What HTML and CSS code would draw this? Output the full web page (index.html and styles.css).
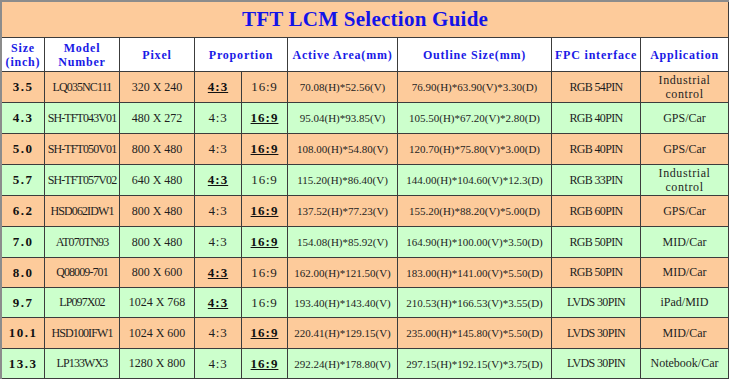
FILE: index.html
```html
<!DOCTYPE html>
<html>
<head>
<meta charset="utf-8">
<link rel="stylesheet" href="styles.css">
</head>
<body>
<table class="guide">
  <colgroup>
    <col class="c-size"><col class="c-model"><col class="c-pixel"><col class="c-p1"><col class="c-p2"><col class="c-active"><col class="c-outline"><col class="c-fpc"><col class="c-app">
  </colgroup>
  <tr class="title-row"><td colspan="9" class="title">TFT LCM Selection Guide</td></tr>
  <tr class="head-row">
    <td class="hd">Size<br>(inch)</td>
    <td class="hd">Model<br>Number</td>
    <td class="hd">Pixel</td>
    <td class="hd" colspan="2">Proportion</td>
    <td class="hd">Active Area(mm)</td>
    <td class="hd">Outline Size(mm)</td>
    <td class="hd">FPC interface</td>
    <td class="hd">Application</td>
  </tr>
  <tr class="row orange">
    <td class="size">3.5</td><td class="model">LQ035NC111</td><td>320 X 240</td><td class="sel">4:3</td><td class="ratio">16:9</td><td class="dim">70.08(H)*52.56(V)</td><td class="dim">76.90(H)*63.90(V)*3.30(D)</td><td class="fpc">RGB 54PIN</td><td class="two">Industrial<br>control</td>
  </tr>
  <tr class="row green">
    <td class="size">4.3</td><td class="model">SH-TFT043V01</td><td>480 X 272</td><td class="ratio">4:3</td><td class="sel">16:9</td><td class="dim">95.04(H)*93.85(V)</td><td class="dim">105.50(H)*67.20(V)*2.80(D)</td><td class="fpc">RGB 40PIN</td><td>GPS/Car</td>
  </tr>
  <tr class="row orange">
    <td class="size">5.0</td><td class="model">SH-TFT050V01</td><td>800 X 480</td><td class="ratio">4:3</td><td class="sel">16:9</td><td class="dim">108.00(H)*54.80(V)</td><td class="dim">120.70(H)*75.80(V)*3.00(D)</td><td class="fpc">RGB 40PIN</td><td>GPS/Car</td>
  </tr>
  <tr class="row green">
    <td class="size">5.7</td><td class="model">SH-TFT057V02</td><td>640 X 480</td><td class="sel">4:3</td><td class="ratio">16:9</td><td class="dim">115.20(H)*86.40(V)</td><td class="dim">144.00(H)*104.60(V)*12.3(D)</td><td class="fpc">RGB 33PIN</td><td class="two">Industrial<br>control</td>
  </tr>
  <tr class="row orange">
    <td class="size">6.2</td><td class="model">HSD062IDW1</td><td>800 X 480</td><td class="ratio">4:3</td><td class="sel">16:9</td><td class="dim">137.52(H)*77.23(V)</td><td class="dim">155.20(H)*88.20(V)*5.00(D)</td><td class="fpc">RGB 60PIN</td><td>GPS/Car</td>
  </tr>
  <tr class="row green">
    <td class="size">7.0</td><td class="model">AT070TN93</td><td>800 X 480</td><td class="ratio">4:3</td><td class="sel">16:9</td><td class="dim">154.08(H)*85.92(V)</td><td class="dim">164.90(H)*100.00(V)*3.50(D)</td><td class="fpc">RGB 50PIN</td><td>MID/Car</td>
  </tr>
  <tr class="row orange r30">
    <td class="size">8.0</td><td class="model">Q08009-701</td><td>800 X 600</td><td class="sel">4:3</td><td class="ratio">16:9</td><td class="dim">162.00(H)*121.50(V)</td><td class="dim">183.00(H)*141.00(V)*5.50(D)</td><td class="fpc">RGB 50PIN</td><td>MID/Car</td>
  </tr>
  <tr class="row green r30">
    <td class="size">9.7</td><td class="model">LP097X02</td><td>1024 X 768</td><td class="sel">4:3</td><td class="ratio">16:9</td><td class="dim">193.40(H)*143.40(V)</td><td class="dim">210.53(H)*166.53(V)*3.55(D)</td><td class="fpc">LVDS 30PIN</td><td>iPad/MID</td>
  </tr>
  <tr class="row orange">
    <td class="size">10.1</td><td class="model">HSD100IFW1</td><td>1024 X 600</td><td class="ratio">4:3</td><td class="sel">16:9</td><td class="dim">220.41(H)*129.15(V)</td><td class="dim">235.00(H)*145.80(V)*5.50(D)</td><td class="fpc">LVDS 30PIN</td><td>MID/Car</td>
  </tr>
  <tr class="row green r30">
    <td class="size">13.3</td><td class="model">LP133WX3</td><td>1280 X 800</td><td class="ratio">4:3</td><td class="sel">16:9</td><td class="dim">292.24(H)*178.80(V)</td><td class="dim">297.15(H)*192.15(V)*3.75(D)</td><td class="fpc">LVDS 30PIN</td><td>Notebook/Car</td>
  </tr>
</table>
</body>
</html>
```
FILE: styles.css
```css
html, body {
  margin: 0;
  padding: 0;
  background: #ffffff;
}

.guide {
  border-collapse: separate;
  border-spacing: 0;
  table-layout: fixed;
  width: 729px;
  border-top: 2px solid #8c8c8c;
  border-left: 2px solid #8c8c8c;
  font-family: "Liberation Serif", "Times New Roman", serif;
  color: #1e1e1e;
}

.c-size { width: 43px; }
.c-model { width: 75px; }
.c-pixel { width: 75px; }
.c-p1 { width: 47px; }
.c-p2 { width: 46px; }
.c-active { width: 110px; }
.c-outline { width: 154px; }
.c-fpc { width: 89px; }
.c-app { width: 88px; }

.guide td {
  padding: 0;
  border-right: 1px solid #3c3c3c;
  border-bottom: 1px solid #3c3c3c;
  text-align: center;
  vertical-align: middle;
  font-size: 12px;
  white-space: nowrap;
  overflow: hidden;
}

.title-row td {
  height: 35px;
  background: #fdcb9b;
  color: #1414e8;
  font-size: 21px;
  font-weight: bold;
  letter-spacing: 0.25px;
}

.head-row td {
  height: 33px;
  background: #ffffff;
  color: #1a1ae6;
  font-weight: bold;
  letter-spacing: 0.8px;
  line-height: 14px;
}

.row td { height: 30px; }
.row.r30 td { height: 29px; }

.orange td { background: #fdcb9b; }
.green td { background: #ccffcc; }

.guide td.size {
  font-size: 13px;
  font-weight: bold;
  color: #111;
  letter-spacing: 1.5px;
}

.guide td.model { letter-spacing: -0.9px; }
.guide td.fpc { letter-spacing: -0.65px; }

.guide td.ratio {
  font-size: 13px;
  letter-spacing: 0.8px;
}

.guide td.sel {
  font-size: 13px;
  font-weight: bold;
  text-decoration: underline;
  letter-spacing: 1px;
  color: #111;
}

.guide td.dim {
  font-size: 11px;
}

.guide td.two {
  line-height: 14px;
  letter-spacing: 0.6px;
}
```
